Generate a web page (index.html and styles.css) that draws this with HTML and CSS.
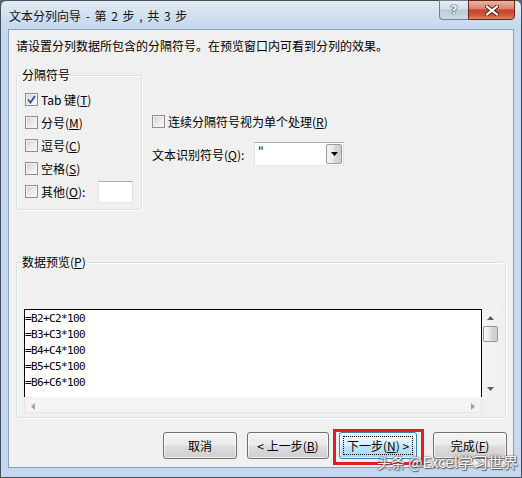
FILE: index.html
```html
<!DOCTYPE html>
<html lang="zh-CN">
<head>
<meta charset="utf-8">
<title>文本分列向导</title>
<link rel="stylesheet" href="styles.css">
</head>
<body>
<div class="window">
  <div class="titlebar">
    <span class="title">文本分列向导 - 第 2 步 , 共 3 步</span>
    <div class="caption-btns">
      <div class="cap-help">?</div>
      <div class="cap-close">
        <svg width="14" height="11" viewBox="0 0 14 11"><path d="M2 1.5 L12 9.5 M12 1.5 L2 9.5" stroke="#4a1a12" stroke-width="4" stroke-linecap="square"/><path d="M2 1.5 L12 9.5 M12 1.5 L2 9.5" stroke="#ffffff" stroke-width="2.2" stroke-linecap="square"/></svg>
      </div>
    </div>
  </div>
  <div class="client">
    <p class="intro">请设置分列数据所包含的分隔符号。在预览窗口内可看到分列的效果。</p>
    <div class="top-row">
      <fieldset class="group delims">
        <legend>分隔符号</legend>
        <div class="delim-list">
          <div class="chk-row"><span class="cbox"><svg width="11" height="11" viewBox="0 0 11 11"><path d="M2 5.5 L4.5 8.5 L9 2" fill="none" stroke="#3b4a8c" stroke-width="1.8"/></svg></span>Tab 键(<u>T</u>)</div>
          <div class="chk-row"><span class="cbox"></span>分号(<u>M</u>)</div>
          <div class="chk-row"><span class="cbox"></span>逗号(<u>C</u>)</div>
          <div class="chk-row"><span class="cbox"></span>空格(<u>S</u>)</div>
          <div class="chk-row"><span class="cbox"></span>其他(<u>O</u>):<span class="other-input"></span></div>
        </div>
      </fieldset>
      <div class="options">
        <div class="chk-row single"><span class="cbox"></span>连续分隔符号视为单个处理(<u>R</u>)</div>
        <div class="qualifier">
          <span class="q-label">文本识别符号(<u>Q</u>):</span>
          <div class="combo">
            <span class="combo-val">"</span>
            <span class="combo-drop"><svg width="7" height="4" viewBox="0 0 7 4"><path d="M0 0 H7 L3.5 4 Z" fill="#000"/></svg></span>
          </div>
        </div>
      </div>
    </div>
    <fieldset class="group preview">
      <legend>数据预览(<u>P</u>)</legend>
      <div class="preview-area">
        <div class="preview-text">
          <div>=B2+C2*100</div>
          <div>=B3+C3*100</div>
          <div>=B4+C4*100</div>
          <div>=B5+C5*100</div>
          <div>=B6+C6*100</div>
        </div>
        <div class="vscroll">
          <span class="arrow"><svg width="7" height="4" viewBox="0 0 7 4"><path d="M0 4 H7 L3.5 0 Z" fill="#5c5c5c"/></svg></span>
          <span class="thumb"></span>
          <span class="track"></span>
          <span class="arrow"><svg width="7" height="4" viewBox="0 0 7 4"><path d="M0 0 H7 L3.5 4 Z" fill="#5c5c5c"/></svg></span>
        </div>
        <div class="hscroll">
          <span class="arrow"><svg width="4" height="7" viewBox="0 0 4 7"><path d="M4 0 V7 L0 3.5 Z" fill="#a0a0a0"/></svg></span>
          <span class="arrow"><svg width="4" height="7" viewBox="0 0 4 7"><path d="M0 0 V7 L4 3.5 Z" fill="#a0a0a0"/></svg></span>
        </div>
      </div>
    </fieldset>
    <div class="buttons">
      <button class="btn w74">取消</button>
      <button class="btn w82">&lt; 上一步(<u>B</u>)</button>
      <span class="highlight-wrap">
        <button class="btn btn-default w78"><span class="focus">下一步(<u>N</u>) &gt;</span></button>
        <span class="red-box"></span>
      </span>
      <button class="btn w74">完成(<u>F</u>)</button>
    </div>
    <div class="watermark"><span class="wm-small">头条</span> @Excel学习世界</div>
  </div>
</div>
</body>
</html>
```

FILE: styles.css
```css
* { box-sizing: border-box; }

body {
  margin: 0;
  width: 522px;
  height: 478px;
  overflow: hidden;
  background: #5d6673;
  font-family: "Noto Sans CJK SC", "Microsoft YaHei", sans-serif;
  font-size: 12px;
  color: #000;
}

.window {
  width: 522px;
  height: 478px;
  border: 1px solid #46505c;
  border-radius: 6px 6px 0 0;
  background: linear-gradient(180deg, #e3ebf5 0px, #d2e0f0 14px, #c4d8ee 28px, #c4d9f0 100%);
  display: flex;
  flex-direction: column;
  padding: 0 7px 9px 7px;
}

.titlebar {
  height: 28px;
  flex: none;
  display: flex;
  justify-content: space-between;
  align-items: flex-start;
}

.title {
  padding: 7px 0 0 1px;
  line-height: 16px;
  color: #111;
  word-spacing: 2px;
}

.caption-btns {
  display: flex;
  margin-top: -1px;
  margin-right: -1px;
}

.cap-help {
  width: 29px;
  height: 20px;
  border: 1px solid #6f7f94;
  border-right: none;
  border-radius: 0 0 0 4px;
  background: linear-gradient(180deg, #e9eef4 0%, #d3dde9 45%, #bccadb 50%, #cdd9e7 100%);
  color: #f4f6f9;
  font-family: "DejaVu Sans", sans-serif;
  font-weight: bold;
  font-size: 13px;
  line-height: 18px;
  text-align: center;
  text-shadow: 0 0 1px #2b3a4d, 0 0 1px #2b3a4d, 0 0 1px #2b3a4d;
}

.cap-close {
  width: 47px;
  height: 20px;
  border: 1px solid #6b2418;
  border-radius: 0 0 4px 0;
  background: linear-gradient(180deg, #ebb2a4 0%, #dc8672 42%, #c8432c 50%, #d15a3e 80%, #e08a68 100%);
  display: flex;
  align-items: center;
  justify-content: center;
}

.client {
  flex: 1;
  position: relative;
  background: #f0f0f0;
  border: 1px solid #8aa0bb;
  padding: 0 7px;
  display: flex;
  flex-direction: column;
}

.intro {
  margin: 8px 0 0 0;
  line-height: 16px;
}

.top-row {
  display: flex;
  align-items: flex-start;
  margin-top: 13px;
}

.group {
  margin: 0;
  padding: 0;
  border: 1px solid #d9e0e6;
  border-radius: 3px;
  box-shadow: inset 1px 1px 0 #ffffff, 1px 1px 0 #ffffff;
}

.group legend {
  padding: 0 1px;
  margin-left: 4px;
  line-height: 16px;
}

.delims {
  width: 126px;
}

.delim-list {
  padding: 5px 8px 6px 8px;
}

.chk-row {
  height: 23px;
  display: flex;
  align-items: center;
  white-space: nowrap;
}

.cbox {
  width: 13px;
  height: 13px;
  flex: none;
  margin-right: 3px;
  border: 1px solid #8e8f8f;
  background: linear-gradient(135deg, #cfcfcf 0%, #e9e9e9 50%, #fafafa 100%);
  box-shadow: inset 0 0 0 1px #f2f2f2;
  display: flex;
  align-items: center;
  justify-content: center;
}

.other-input {
  width: 35px;
  height: 22px;
  margin-left: auto;
  background: #fff;
  border: 1px solid #abadb3;
  border-color: #abadb3 #dbdfe6 #e3e9ef #e2e3ea;
}

.options {
  margin-left: 10px;
  padding-top: 46px;
}

.chk-row.single {
  height: 16px;
}

.qualifier {
  display: flex;
  align-items: center;
  margin-top: 13px;
  height: 24px;
}

.q-label {
  width: 102px;
  flex: none;
}

.combo {
  width: 90px;
  height: 24px;
  background: #fff;
  border: 1px solid #abadb3;
  border-color: #abadb3 #dbdfe6 #e3e9ef #e2e3ea;
  display: flex;
  align-items: stretch;
  justify-content: space-between;
}

.combo-val {
  padding: 1px 0 0 3px;
  line-height: 16px;
}

.combo-drop {
  width: 16px;
  margin: 1px;
  border: 1px solid #9a9a9a;
  border-radius: 2px;
  background: linear-gradient(90deg, #f4f4f4 0%, #e8e8e8 50%, #d8d8d8 51%, #cfcfcf 100%);
  display: flex;
  align-items: center;
  justify-content: center;
}

.preview {
  width: 490px;
  margin-top: 44px;
}

.preview-area {
  display: grid;
  grid-template-columns: 458px 16px;
  grid-template-rows: 88px 16px;
  padding: 39px 7px 4px 7px;
}

.preview-text {
  background: #fff;
  border: 1px solid #000;
  border-bottom: none;
  padding-top: 1px;
  font-family: "DejaVu Sans Mono", "Liberation Mono", monospace;
  font-size: 11px;
  letter-spacing: -0.62px;
  line-height: 16px;
  overflow: hidden;
}

.vscroll {
  display: flex;
  flex-direction: column;
  align-items: center;
  background: #f2f2f2;
}

.vscroll .arrow {
  height: 17px;
  width: 16px;
  display: flex;
  align-items: center;
  justify-content: center;
}

.vscroll .thumb {
  width: 15px;
  height: 16px;
  border: 1px solid #979797;
  border-radius: 2px;
  background: linear-gradient(90deg, #f5f5f5 0%, #e8e8e8 45%, #d6d6d6 55%, #cdcdcd 100%);
}

.vscroll .track {
  flex: 1;
}

.hscroll {
  display: flex;
  justify-content: space-between;
  align-items: center;
  padding: 0 6px;
  background: #f4f4f4;
  border: 1px solid #e6e6e6;
  border-top: none;
}

.buttons {
  display: flex;
  justify-content: flex-end;
  align-items: center;
  margin-top: 14px;
  margin-right: -1px;
}

.btn {
  height: 27px;
  margin: 0 0 0 10px;
  padding: 0;
  border: 1px solid #707070;
  border-radius: 3px;
  background: linear-gradient(180deg, #f2f2f2 0%, #ebebeb 48%, #dddddd 52%, #cfcfcf 100%);
  box-shadow: inset 0 0 0 1px rgba(255, 255, 255, 0.7);
  font-family: "Noto Sans CJK SC", "Microsoft YaHei", sans-serif;
  font-size: 12px;
  color: #000;
  line-height: 16px;
}

.w74 { width: 74px; }
.w78 { width: 78px; }
.w82 { width: 82px; }

.buttons > .btn:last-child {
  margin-left: 16px;
}

.highlight-wrap {
  position: relative;
  display: flex;
}

.btn-default {
  border-color: #3c7fb1;
  background: linear-gradient(180deg, #eaf6fd 0%, #d9f0fc 48%, #bee6fd 52%, #a7d9f5 100%);
  display: flex;
  align-items: stretch;
  padding: 3px;
}

.btn-default .focus {
  flex: 1;
  border: 1px dotted #000;
  display: flex;
  align-items: center;
  justify-content: center;
}

.red-box {
  position: absolute;
  left: 4px;
  right: -7px;
  top: -3px;
  bottom: -6px;
  border: 3px solid #e31d24;
  pointer-events: none;
}

.watermark {
  position: absolute;
  left: 368px;
  top: 423px;
  color: #ffffff;
  font-size: 15px;
  line-height: 18px;
  white-space: nowrap;
  text-shadow: 0 0 1px #4a4a4a, 0 0 2px #4a4a4a, 1px 1px 1px #555;
  opacity: 0.92;
}

.wm-small {
  font-size: 14px;
}
```
